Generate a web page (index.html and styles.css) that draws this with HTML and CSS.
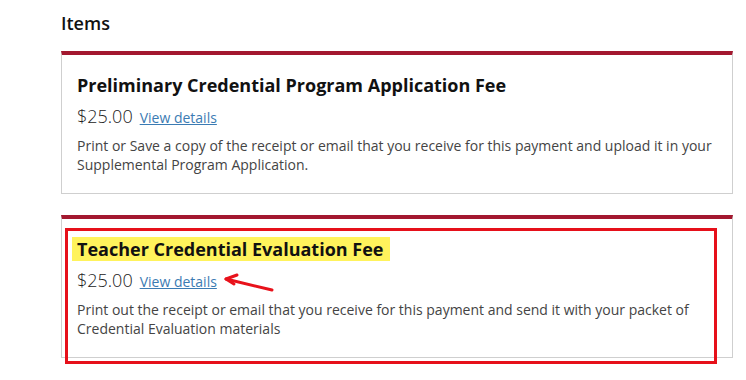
FILE: index.html
```html
<!DOCTYPE html>
<html lang="en">
<head>
<meta charset="utf-8">
<title>Items</title>
<link rel="stylesheet" href="styles.css">
</head>
<body>
<main class="items">
  <h2 class="items-title">Items</h2>
  <section class="card">
    <h3 class="card-title">Preliminary Credential Program Application Fee</h3>
    <div class="price-row">
      <span class="price">$25.00</span>
      <a class="details-link" href="#">View details</a>
    </div>
    <p class="desc">Print or Save a copy of the receipt or email that you receive for this payment and upload it in your Supplemental Program Application.</p>
  </section>
  <section class="card">
    <h3 class="card-title"><span class="highlight">Teacher Credential Evaluation Fee</span></h3>
    <div class="price-row">
      <span class="price">$25.00</span>
      <a class="details-link" href="#">View details</a>
    </div>
    <p class="desc">Print out the receipt or email that you receive for this payment and send it with your packet of Credential Evaluation materials</p>
  </section>
</main>
<div class="annot-box"></div>
<svg class="annot-arrow" width="60" height="24" viewBox="0 0 60 24" aria-hidden="true">
  <g fill="none" stroke="#e8121b" stroke-width="3" stroke-linecap="round" stroke-linejoin="round">
    <line x1="52" y1="17" x2="6" y2="6"/>
    <polyline points="17,2 6,6 14,11"/>
  </g>
</svg>
</body>
</html>
```

FILE: styles.css
```css
html, body {
  margin: 0;
  padding: 0;
  background: #ffffff;
}

body {
  font-family: "Open Sans", "Noto Sans", "Liberation Sans", sans-serif;
  color: #222;
  position: relative;
  width: 746px;
  height: 380px;
  overflow: hidden;
}

.items {
  padding: 11px 0 0 61px;
  width: 672px;
}

.items-title {
  margin: 0 0 15px 0;
  font-size: 18px;
  font-weight: 600;
  line-height: 25px;
  color: #111;
}

.card {
  box-sizing: border-box;
  width: 672px;
  border: 1px solid #cfcfcf;
  border-top: 4px solid #a3182f;
  padding: 18px 16px 19px 15px;
  margin-bottom: 21px;
}

.card-title {
  margin: 0;
  font-size: 18px;
  font-weight: 700;
  line-height: 24px;
  color: #111;
}

.highlight {
  display: inline-block;
  background: #fff35c;
  padding: 0 7px 0 5px;
  margin-left: -5px;
}

.price-row {
  margin-top: 7px;
  height: 24px;
  line-height: 24px;
  display: flex;
  align-items: baseline;
  gap: 7px;
  white-space: nowrap;
}

.price {
  font-size: 18px;
  font-weight: 300;
  color: #222;
}

.details-link {
  font-size: 14px;
  color: #3b7bb3;
  text-decoration: underline;
}

.desc {
  margin: 8px 0 0 0;
  font-size: 14px;
  line-height: 19px;
  color: #444;
}

.annot-box {
  position: absolute;
  left: 65px;
  top: 228px;
  width: 652px;
  height: 136px;
  box-sizing: border-box;
  border: 3px solid #e6101a;
}

.annot-arrow {
  position: absolute;
  left: 220px;
  top: 273px;
}
```
